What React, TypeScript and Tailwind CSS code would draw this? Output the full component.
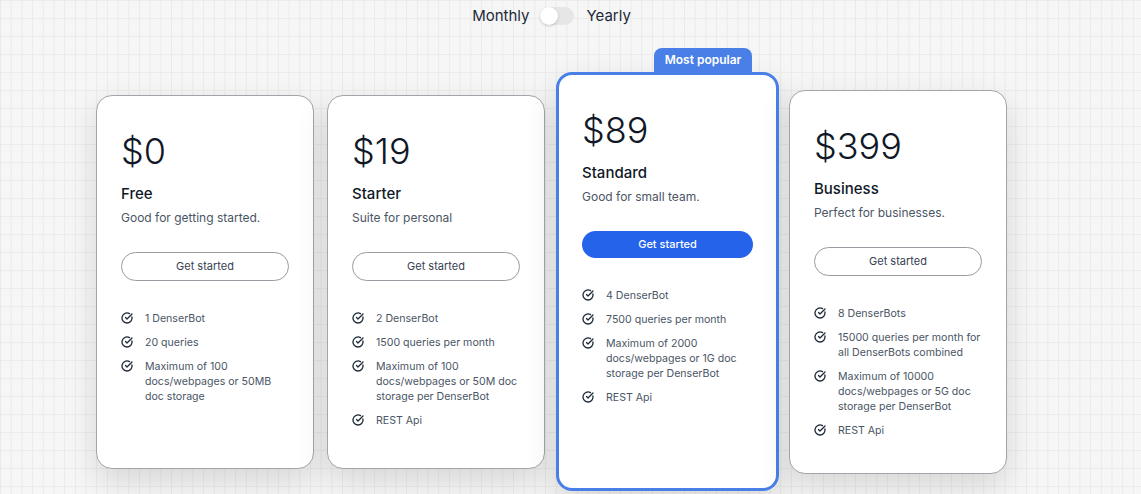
import { CircleCheckBig } from "lucide-react";

type Plan = {
  price: string;
  name: string;
  description: string;
  features: string[];
  height: string;
  popular?: boolean;
};

const plans: Plan[] = [
  {
    price: "$0",
    name: "Free",
    description: "Good for getting started.",
    features: ["1 DenserBot", "20 queries", "Maximum of 100 docs/webpages or 50MB doc storage"],
    height: "h-[374px]",
  },
  {
    price: "$19",
    name: "Starter",
    description: "Suite for personal",
    features: [
      "2 DenserBot",
      "1500 queries per month",
      "Maximum of 100 docs/webpages or 50M doc storage per DenserBot",
      "REST Api",
    ],
    height: "h-[374px]",
  },
  {
    price: "$89",
    name: "Standard",
    description: "Good for small team.",
    features: [
      "4 DenserBot",
      "7500 queries per month",
      "Maximum of 2000 docs/webpages or 1G doc storage per DenserBot",
      "REST Api",
    ],
    height: "h-[419px]",
    popular: true,
  },
  {
    price: "$399",
    name: "Business",
    description: "Perfect for businesses.",
    features: [
      "8 DenserBots",
      "15000 queries per month for all DenserBots combined",
      "Maximum of 10000 docs/webpages or 5G doc storage per DenserBot",
      "REST Api",
    ],
    height: "h-[384px]",
  },
];

function PlanCard({ plan }: { plan: Plan }) {
  return (
    <div
      className={`relative flex w-full flex-col rounded-2xl bg-white pt-[35px] shadow-[0_12px_32px_rgba(0,0,0,0.13)] ${plan.height} ${
        plan.popular ? "border-[3px] border-[#4a7fe8] px-[23px]" : "border border-[#a3a3ab] px-6"
      }`}
    >
      {plan.popular && (
        <div className="absolute -top-[27px] right-[24px] flex h-[24px] w-[98px] items-center justify-center rounded-t-lg bg-[#4a7fe8] text-[12px] font-semibold text-white">
          Most popular
        </div>
      )}
      <div className="text-4xl leading-[40px] font-light text-gray-900">{plan.price}</div>
      <h3 className="mt-3 text-[15px] leading-[22px] font-medium text-gray-900">{plan.name}</h3>
      <p className="mt-[4px] text-[12px] leading-[18px] text-gray-600">{plan.description}</p>
      {plan.popular ? (
        <button className="mt-[25px] h-[27px] w-full rounded-full bg-[#2563eb] text-[11px] font-medium text-white">
          Get started
        </button>
      ) : (
        <button className="mt-[25px] h-[29px] w-full rounded-full border border-[#9a9aa2] text-[11px] text-gray-700">
          Get started
        </button>
      )}
      <ul className="mt-[30px] flex flex-col gap-[9px]">
        {plan.features.map((f) => (
          <li key={f} className="flex items-start gap-3 text-[10.6px] leading-[15px] text-gray-600">
            <CircleCheckBig size={12} strokeWidth={2.6} className="mt-[1px] shrink-0 text-gray-800" />
            <span>{f}</span>
          </li>
        ))}
      </ul>
    </div>
  );
}

export default function App() {
  return (
    <div
      className="h-[494px] w-full overflow-hidden bg-[#f6f6f6] bg-[linear-gradient(to_right,#eaeaea_1px,transparent_1px),linear-gradient(to_bottom,#ececec_1px,transparent_1px)] bg-[size:10.7px_18px]"
      style={{ fontFamily: "Inter, 'Noto Sans', sans-serif" }}
    >
      <div className="flex w-[1103px] flex-col items-center pt-[7px]">
        <div className="flex h-[18px] items-center">
          <span className="text-[15px] text-gray-800">Monthly</span>
          <div className="ml-[11px] flex h-[18px] w-[34px] items-center rounded-full bg-[#e6e6e6]">
            <div className="h-[18px] w-[18px] rounded-full bg-white shadow-[0_1px_3px_rgba(0,0,0,0.2)]" />
          </div>
          <span className="ml-[12px] text-[15px] text-gray-800">Yearly</span>
        </div>
        <div className="mt-[47px] flex items-center">
          <div className="w-[218px]">
            <PlanCard plan={plans[0]} />
          </div>
          <div className="ml-[13px] w-[218px]">
            <PlanCard plan={plans[1]} />
          </div>
          <div className="ml-[11px] w-[223px]">
            <PlanCard plan={plans[2]} />
          </div>
          <div className="ml-[10px] w-[218px]">
            <PlanCard plan={plans[3]} />
          </div>
        </div>
      </div>
    </div>
  );
}
